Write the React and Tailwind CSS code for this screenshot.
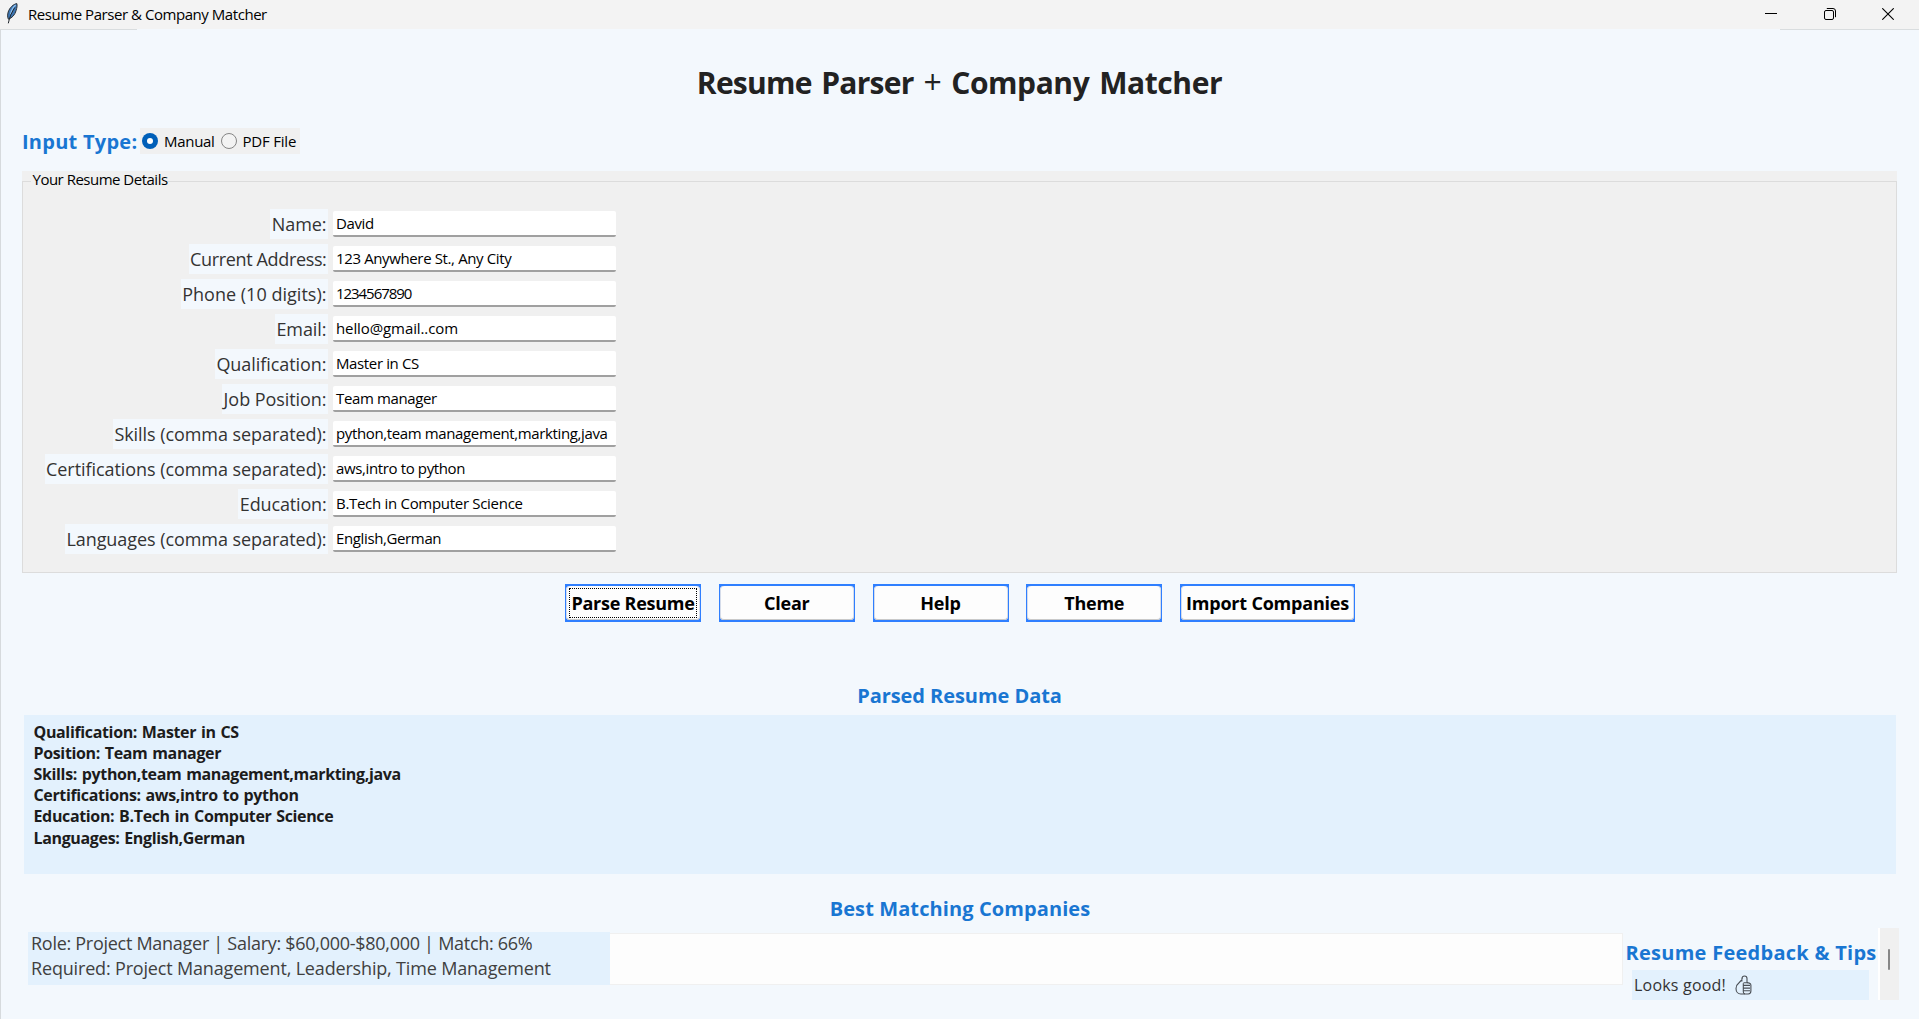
const fields = [
  ["Name:", "David"],
  ["Current Address:", "123 Anywhere St., Any City", "tracking-[-0.35px]"],
  ["Phone (10 digits):", "1234567890", "tracking-[0.02px]", "tracking-[-1.05px]"],
  ["Email:", "hello@gmail..com", "", "tracking-[-0.1px]"],
  ["Qualification:", "Master in CS"],
  ["Job Position:", "Team manager"],
  ["Skills (comma separated):", "python,team management,markting,java"],
  ["Certifications (comma separated):", "aws,intro to python"],
  ["Education:", "B.Tech in Computer Science", "tracking-[-0.16px]", "tracking-[-0.3px]"],
  ["Languages (comma separated):", "English,German"],
];

const parsed = [
  "Qualification: Master in CS",
  "Position: Team manager",
  "Skills: python,team management,markting,java",
  "Certifications: aws,intro to python",
  "Education: B.Tech in Computer Science",
  "Languages: English,German",
];

function Feather() {
  return (
    <svg className="-mt-0.5 ml-1.5 h-[21px] w-3" viewBox="0 0 12 21" fill="none">
      <path d="M10.8 0.6C7.4 1.2 3.6 4.6 2.2 9c-.8 2.700-.8 5.400.2 7.200 3.800-1.200 6.600-4.600 7.700-8.600.8-2.800 1.300-5 .7-7z" fill="#3f78b5" stroke="#2b3137" strokeWidth="1" />
      <path d="M9.600 2C7 4.200 5.400 7.400 4.600 11" stroke="#8cc0f0" strokeWidth="1.300" />
      <path d="M8.800 4.500C6 9 3.600 13.500 2.300 20.300" stroke="#20262c" strokeWidth="1" />
    </svg>
  );
}

function ThumbUp() {
  return (
    <svg className="ml-[9px] h-[20px] w-[17px]" viewBox="0 0 17 20" fill="none" stroke="#4a4f55" strokeWidth="1.100" strokeLinejoin="round">
      <path d="M6.900 6.500V3.800C7.100 2 8 1 9.500 1c1.600 0 2.500 1 2.500 2.600v3.900l2.300.6c1 .3 1.600 1 1.600 2v6c0 1.800-1 2.900-2.700 2.900H5.800C3 19 1 16.700 1 13.500c0-2.600 1.100-4.200 2.800-5.500C5.400 6.700 6.500 5.700 7.500 3.300" />
      <path d="M8.300 8.200v8.500c0 1.200.6 2 1.600 2.200M8.500 7.700h4.500M8.500 10.400h6.500M8.500 13.100h6.500M8.500 15.800h6.500" />
    </svg>
  );
}

function TitleBar() {
  return (
    <header className="flex h-[29px] items-center bg-[#f3f3f3]">
      <Feather />
      <span className="-mt-px ml-2.5 text-[15px] leading-[27px] tracking-[-0.45px] text-black">Resume Parser &amp; Company Matcher</span>
      <div className="-mt-px mr-[25px] ml-auto flex items-center gap-[46.500px] text-black">
        <svg className="h-3 w-3" viewBox="0 0 12 12"><path d="M0 5.500H12" stroke="currentColor" /></svg>
        <svg className="h-3 w-3" viewBox="0 0 12 12" fill="none" stroke="currentColor">
          <rect x="0.500" y="2.500" width="9" height="9" rx="1.500" />
          <path d="M2.800 0.500H9a2.500 2.500 0 0 1 2.500 2.500v6.200" />
        </svg>
        <svg className="h-3 w-3" viewBox="0 0 12 12"><path d="M.3 .3 11.700 11.700M11.700 .3.3 11.700" stroke="currentColor" strokeWidth="1.100" /></svg>
      </div>
    </header>
  );
}

function Corners() {
  return (
    <span className="absolute inset-0 border-x border-y-2 border-[#2f7fff]">
      <span className="block h-full w-full rounded-[4px] bg-[#fdfdfd] shadow-[inset_0_-1px_0_#c9c9c9,inset_1px_0_0_#d5dcea,inset_-1px_0_0_#d5dcea]" />
    </span>
  );
}

function Button({ children, wide, focused }) {
  return (
    <button className={`relative flex h-[38px] items-center justify-center bg-[#2f7fff] text-[18px] font-bold whitespace-nowrap text-black ${wide ? "w-[175px] tracking-[-0.2px]" : "w-[136px] tracking-[-0.25px]"}`}>
      <Corners />
      {focused && <span className="absolute inset-x-[4px] inset-y-[4px] border border-dotted border-black" />}
      <span className="relative leading-[38px]">{children}</span>
    </button>
  );
}

export default function App() {
  return (
    <div className="flex h-[1019px] w-[1919px] flex-col overflow-hidden bg-[#f3f8fd] font-['Open_Sans','Noto_Sans',sans-serif]">
      <TitleBar />
      <div className="flex h-px shrink-0 justify-between">
        <span className="w-[137px] bg-[#d9dddf]" />
        <span className="w-[139px] bg-[#d9dddf]" />
      </div>
      <main className="flex min-h-0 flex-1 flex-col border-l border-[#d6dadd] pl-[21px]">
        <h1 className="mt-[34px] mr-[22px] h-9 text-center text-[30px] leading-9 font-bold tracking-[-0.42px] [word-spacing:2.500px] text-[#222]">
          <span className="tracking-[-0.75px]">Resume Parser</span> <span className="text-[32px] font-medium">+</span> Company Matcher
        </h1>

        <div className="mt-7 flex h-[26px] items-center">
          <span className="w-[118px] text-[20px] leading-[27px] font-bold tracking-[0.25px] whitespace-nowrap text-[#1976d2]">Input Type:</span>
          <div className="flex h-[26px] w-40 items-center bg-[#f0f0f0] pl-[2px] text-[15px] leading-[25px] text-black">
            <span className="flex size-4 items-center justify-center rounded-full bg-[#005fb8]"><span className="size-1.5 rounded-full bg-white" /></span>
            <span className="ml-1.5 w-[50px] tracking-[-0.3px]">Manual</span>
            <span className="ml-[6.500px] size-4 rounded-full border border-[#858585] bg-[#f3f3f3]" />
            <span className="ml-1.5 tracking-[-0.2px]">PDF File</span>
          </div>
        </div>

        <section className="mt-[17px] flex h-[402px] w-[1875px] shrink-0 flex-col bg-[#f0f0f0]">
          <div className="flex h-[18px] shrink-0 items-start">
            <span className="mt-[9.500px] h-[8.500px] w-[9px] border-t border-l border-[#dcdcdc]" />
            <span className="w-[137px] pl-[1.500px] text-[15px] leading-[17px] tracking-[-0.5px] whitespace-nowrap text-black">Your Resume Details</span>
            <span className="mt-[9.500px] h-[8.500px] flex-1 border-t border-r border-[#dcdcdc]" />
          </div>
          <div className="flex flex-1 flex-col gap-[5px] border-x border-b border-[#dcdcdc] pt-5">
            {fields.map(([label, value, labelTracking, valueTracking]) => (
              <div key={label} className="flex h-[30px] items-center">
                <div className="flex w-[305px] justify-end">
                  <label className={`h-[30px] bg-[#f3f8fd] px-[1.500px] text-[18px] leading-[31px] whitespace-nowrap text-[#333] ${labelTracking || "tracking-[-0.06px]"}`}>{label}</label>
                </div>
                <div className={`ml-[5px] h-[26px] w-[283px] rounded-[2px] border-b-2 border-[#a0a0a0] bg-white pl-[3px] text-[15px] leading-[25px] whitespace-nowrap text-black ${valueTracking || "tracking-[-0.37px]"}`}>{value}</div>
              </div>
            ))}
          </div>
        </section>

        <div className="mt-[11px] ml-[543px] flex gap-[17.750px]">
          <Button focused>Parse Resume</Button>
          <Button>Clear</Button>
          <Button>Help</Button>
          <Button>Theme</Button>
          <Button wide>Import Companies</Button>
        </div>

        <h2 className="mt-[60px] mr-[22px] h-7 text-center text-[20px] leading-7 font-bold tracking-[-0.06px] text-[#1976d2]">Parsed Resume Data</h2>
        <div className="mt-[5px] ml-[1.500px] h-[159px] w-[1872.500px] bg-[#e3f1fd] pt-[6.500px] pl-2.5">
          {parsed.map((line) => (
            <p key={line} className="text-[16px] leading-[21.200px] font-bold tracking-[-0.35px] [word-spacing:1px] text-[#1c1c1c]">{line}</p>
          ))}
        </div>

        <h2 className="mt-5 mr-[21px] h-7 text-center text-[20px] leading-[30px] font-bold tracking-[0.1px] text-[#1976d2]">Best Matching Companies</h2>
        <div className="mt-1.5 flex h-[72px] items-start pl-1.5">
          <div className="mt-1 h-[53px] w-[581.500px] bg-[#e3f1fd] pl-[3px] text-[18px] leading-[25.200px] whitespace-nowrap text-[#404040]">
            <p className="-mt-[1.500px] tracking-[-0.28px]">Role: Project Manager | Salary: $60,000-$80,000 | Match: 66%</p>
            <p className="tracking-[-0.17px]">Required: Project Management, Leadership, Time Management</p>
          </div>
          <div className="mt-[5px] h-[52px] w-[1013px] border-y border-r border-[#f0f0f0] bg-[#fdfdfd]" />
          <div className="ml-[3px] w-[252px]">
            <h3 className="mt-2.5 h-7 text-[20px] leading-[29px] font-bold tracking-[0.27px] whitespace-nowrap text-[#1976d2]">Resume Feedback &amp; Tips</h3>
            <div className="mt-1 ml-[6px] flex h-[30px] w-[237.500px] items-center bg-[#e3f1fd] pl-[2.500px] text-[16px] tracking-[0.2px] text-[#333]">
              Looks good!
              <ThumbUp />
            </div>
          </div>
          <div className="flex h-[72px] w-[21px] justify-center border-l-2 border-white bg-[#f0f0f0]">
            <span className="mt-[21px] h-[21px] w-[2.500px] rounded-full bg-[#868686]" />
          </div>
        </div>
      </main>
    </div>
  );
}
